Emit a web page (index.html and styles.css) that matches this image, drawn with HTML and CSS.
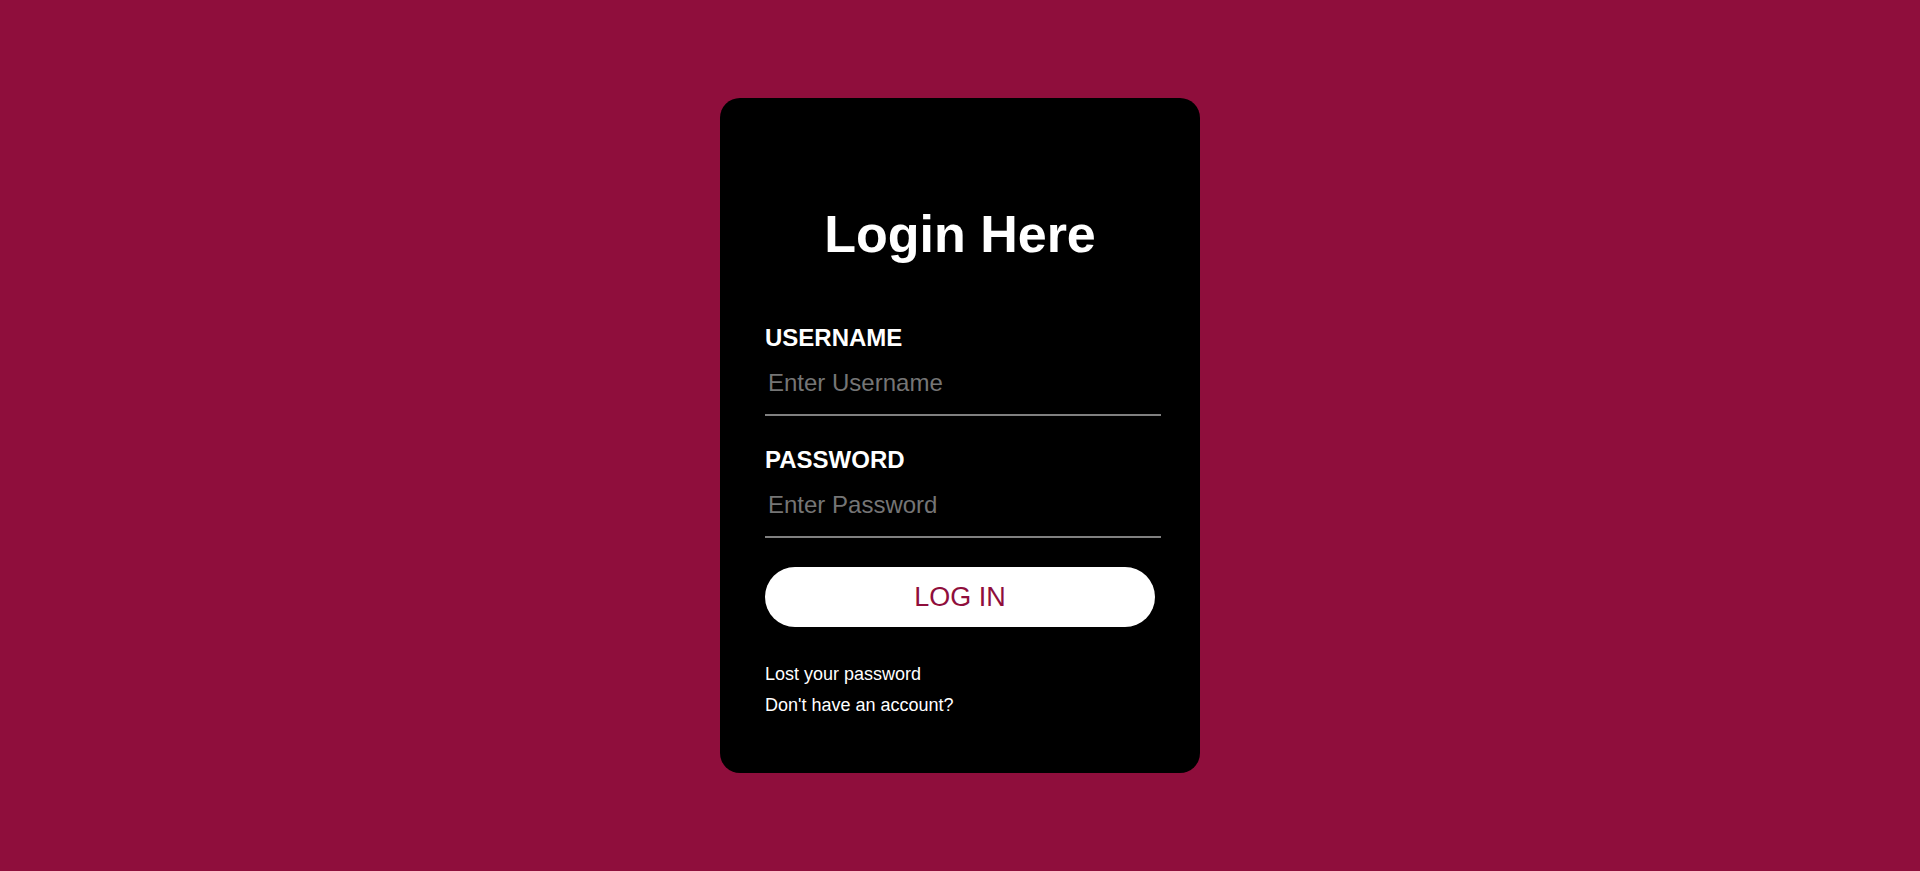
FILE: index.html
```html
<!DOCTYPE html>
<html lang="en">
<head>
<meta charset="utf-8">
<title>Login</title>
<link rel="stylesheet" href="styles.css">
</head>
<body>
<div class="login-box">
  <h1 class="title">Login Here</h1>
  <form class="login-form">
    <label class="field-label" for="username">USERNAME</label>
    <input class="field-input" id="username" type="text" placeholder="Enter Username">
    <label class="field-label second" for="password">PASSWORD</label>
    <input class="field-input" id="password" type="password" placeholder="Enter Password">
    <button class="login-btn" type="button">LOG IN</button>
    <div class="links">
      <a class="link" href="#">Lost your password</a>
      <a class="link" href="#">Don't have an account?</a>
    </div>
  </form>
</div>
</body>
</html>
```
FILE: styles.css
```css
html, body {
  margin: 0;
  padding: 0;
}
body {
  height: 100vh;
  background: #8f0e3c;
  display: flex;
  align-items: center;
  justify-content: center;
  font-family: "Liberation Sans", Arial, sans-serif;
}
.login-box {
  box-sizing: border-box;
  width: 480px;
  height: 675px;
  background: #000;
  border-radius: 20px;
  padding: 106px 45px 0 45px;
  color: #fff;
}
.title {
  margin: 0 0 61px 0;
  font-size: 52px;
  line-height: 60px;
  font-weight: bold;
  text-align: center;
}
.login-form {
  display: flex;
  flex-direction: column;
  align-items: flex-start;
}
.field-label {
  display: block;
  font-size: 24px;
  line-height: 26px;
  font-weight: bold;
}
.field-label.second {
  margin-top: 31px;
}
.field-input {
  box-sizing: content-box;
  margin: 18px 0 0 0;
  width: 391px;
  height: 28px;
  padding: 0 2px 17px 3px;
  border: none;
  border-bottom: 2px solid #808080;
  background: transparent;
  outline: none;
  color: #fff;
  font-family: "Liberation Sans", Arial, sans-serif;
  font-size: 24px;
}
.field-input::placeholder {
  color: #757575;
}
.login-btn {
  margin-top: 29px;
  width: 390px;
  height: 60px;
  border: none;
  border-radius: 30px;
  background: #fff;
  color: #8f0e3c;
  font-family: "Liberation Sans", Arial, sans-serif;
  font-size: 27px;
  cursor: pointer;
}
.links {
  margin-top: 32px;
  display: flex;
  flex-direction: column;
}
.link {
  color: #fff;
  text-decoration: none;
  font-size: 18px;
  line-height: 31px;
}
```
